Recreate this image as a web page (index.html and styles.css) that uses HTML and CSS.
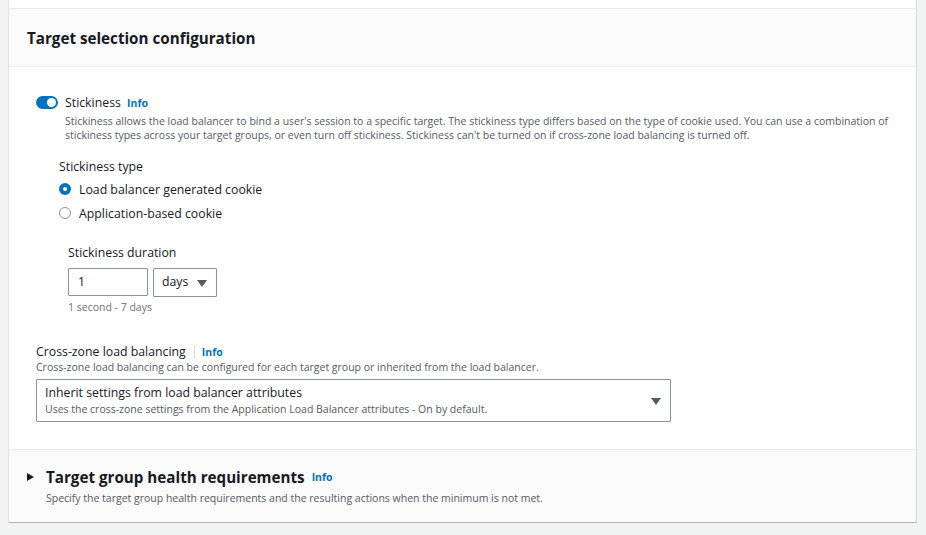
FILE: index.html
```html
<!DOCTYPE html>
<html>
<head>
<meta charset="utf-8">
<link rel="stylesheet" href="styles.css">
</head>
<body>
<div class="panel">
  <div class="prev-strip"></div>
  <div class="header">
    <h2 class="title">Target selection configuration</h2>
  </div>
  <div class="content">
    <div class="toggle-row">
      <span class="toggle"><span class="knob"></span></span>
      <div class="toggle-text">
        <div class="label">Stickiness <a class="info">Info</a></div>
        <p class="desc">Stickiness allows the load balancer to bind a user's session to a specific target. The stickiness type differs based on the type of cookie used. You can use a combination of stickiness types across your target groups, or even turn off stickiness. Stickiness can't be turned on if cross-zone load balancing is turned off.</p>
      </div>
    </div>
    <div class="sticky-type">
      <div class="field-label">Stickiness type</div>
      <div class="radio-row"><span class="radio checked"></span><span>Load balancer generated cookie</span></div>
      <div class="radio-row"><span class="radio"></span><span>Application-based cookie</span></div>
      <div class="duration">
        <div class="field-label">Stickiness duration</div>
        <div class="inputs">
          <div class="input">1</div>
          <div class="unit">days <span class="caret"></span></div>
        </div>
        <div class="hint">1 second - 7 days</div>
      </div>
    </div>
    <div class="crosszone">
      <div class="field-label cz-label"><span>Cross-zone load balancing</span><span class="sep"></span><a class="info">Info</a></div>
      <div class="hint cz-desc">Cross-zone load balancing can be configured for each target group or inherited from the load balancer.</div>
      <div class="select">
        <div class="select-text">
          <div class="select-main">Inherit settings from load balancer attributes</div>
          <div class="select-sub">Uses the cross-zone settings from the Application Load Balancer attributes - On by default.</div>
        </div>
        <span class="caret"></span>
      </div>
    </div>
  </div>
  <div class="footer">
    <div class="footer-head">
      <span class="tri"></span>
      <span class="footer-title">Target group health requirements</span>
      <a class="info">Info</a>
    </div>
    <div class="footer-desc">Specify the target group health requirements and the resulting actions when the minimum is not met.</div>
  </div>
</div>
</body>
</html>
```
FILE: styles.css
```css
* { box-sizing: border-box; }
body {
  margin: 0;
  background: #f2f3f3;
  font-family: "Open Sans", "Noto Sans", sans-serif;
  color: #16191f;
  height: 535px;
  overflow: hidden;
}
.panel {
  margin: 0 9px 0 8px;
  background: #fff;
  border-left: 1px solid #e1e4e4;
  border-right: 1px solid #d5dbdb;
  border-bottom: 1px solid #aab7b8;
}
.prev-strip {
  height: 9px;
  border-bottom: 1px solid #eaeded;
}
.header {
  height: 58px;
  background: #fafafa;
  border-bottom: 1px solid #eaeded;
  display: flex;
  align-items: center;
  padding-left: 18px;
  padding-top: 1px;
}
.title {
  margin: 0;
  font-size: 15.2px;
  line-height: 20px;
  font-weight: 700;
  color: #16191f;
}
.content {
  height: 383px;
  padding: 28px 0 0 27px;
  border-bottom: 1px solid #eaeded;
}
.toggle-row {
  display: flex;
  align-items: flex-start;
}
.toggle {
  width: 22px;
  height: 13px;
  border-radius: 7px;
  background: #0073bb;
  position: relative;
  margin-top: 1px;
  margin-right: 7px;
  flex: none;
}
.knob {
  position: absolute;
  right: 2px;
  top: 2px;
  width: 9px;
  height: 9px;
  border-radius: 50%;
  background: #fff;
}
.label {
  font-size: 12.3px;
  line-height: 16px;
}
.info {
  color: #0073bb;
  font-weight: 700;
  font-size: 10.5px;
  margin-left: 3px;
}
.desc {
  margin: 3px 0 0;
  font-size: 10.5px;
  line-height: 14px;
  color: #545b64;
  padding-right: 20px;
}
.sticky-type {
  padding-left: 23px;
  margin-top: 17px;
}
.field-label {
  font-size: 12.3px;
  line-height: 16px;
}
.radio-row {
  display: flex;
  align-items: center;
  height: 24px;
  font-size: 12.3px;
}
.sticky-type > .field-label { margin-bottom: 2px; }
.radio {
  width: 12px;
  height: 12px;
  border-radius: 50%;
  border: 1px solid #879596;
  margin-right: 8px;
  flex: none;
}
.radio.checked {
  border: 4px solid #0073bb;
}
.duration {
  padding-left: 9px;
  margin-top: 20px;
}
.inputs {
  display: flex;
  gap: 5px;
  margin-top: 7px;
}
.input {
  width: 80px;
  height: 28px;
  border: 1px solid #879596;
  border-radius: 1px;
  font-size: 12.3px;
  line-height: 26px;
  padding-left: 9px;
}
.unit {
  width: 64px;
  height: 29px;
  border: 1px solid #879596;
  border-radius: 1px;
  font-size: 12.3px;
  display: flex;
  align-items: center;
  justify-content: space-between;
  padding: 0 9px 3px 8px;
}
.caret {
  width: 0;
  height: 0;
  border-left: 5px solid transparent;
  border-right: 5px solid transparent;
  border-top: 7px solid #545b64;
  display: inline-block;
}
.unit .caret { margin-top: 4px; }
.hint {
  font-size: 10.5px;
  line-height: 14px;
  color: #687078;
  margin-top: 3px;
}
.crosszone {
  margin-top: 30px;
}
.cz-label {
  display: flex;
  align-items: center;
}
.sep {
  width: 1px;
  height: 14px;
  background: #d5dbdb;
  margin: 0 7px 0 8px;
}
.cz-label .info { margin-left: 0; }
.cz-desc { margin-top: 0; color: #545b64; }
.select {
  width: 635px;
  height: 43px;
  margin-top: 5px;
  border: 1px solid #879596;
  border-radius: 1px;
  display: flex;
  align-items: center;
  justify-content: space-between;
  padding: 1px 9px 0 8px;
}
.select-main { font-size: 12.3px; line-height: 16px; }
.select-sub { font-size: 10.5px; line-height: 16px; color: #545b64; }
.footer {
  height: 72px;
  background: #fafafa;
  padding: 17px 0 0 18px;
}
.footer-head {
  display: flex;
  align-items: center;
  height: 20px;
}
.tri {
  width: 0;
  height: 0;
  border-top: 4px solid transparent;
  border-bottom: 4px solid transparent;
  border-left: 7px solid #16191f;
  margin-right: 12px;
}
.footer-title {
  font-size: 15.2px;
  font-weight: 700;
}
.footer-head .info { margin-left: 7px; }
.footer-desc {
  font-size: 10.5px;
  line-height: 14px;
  color: #545b64;
  margin-top: 4px;
  padding-left: 19px;
}
```
